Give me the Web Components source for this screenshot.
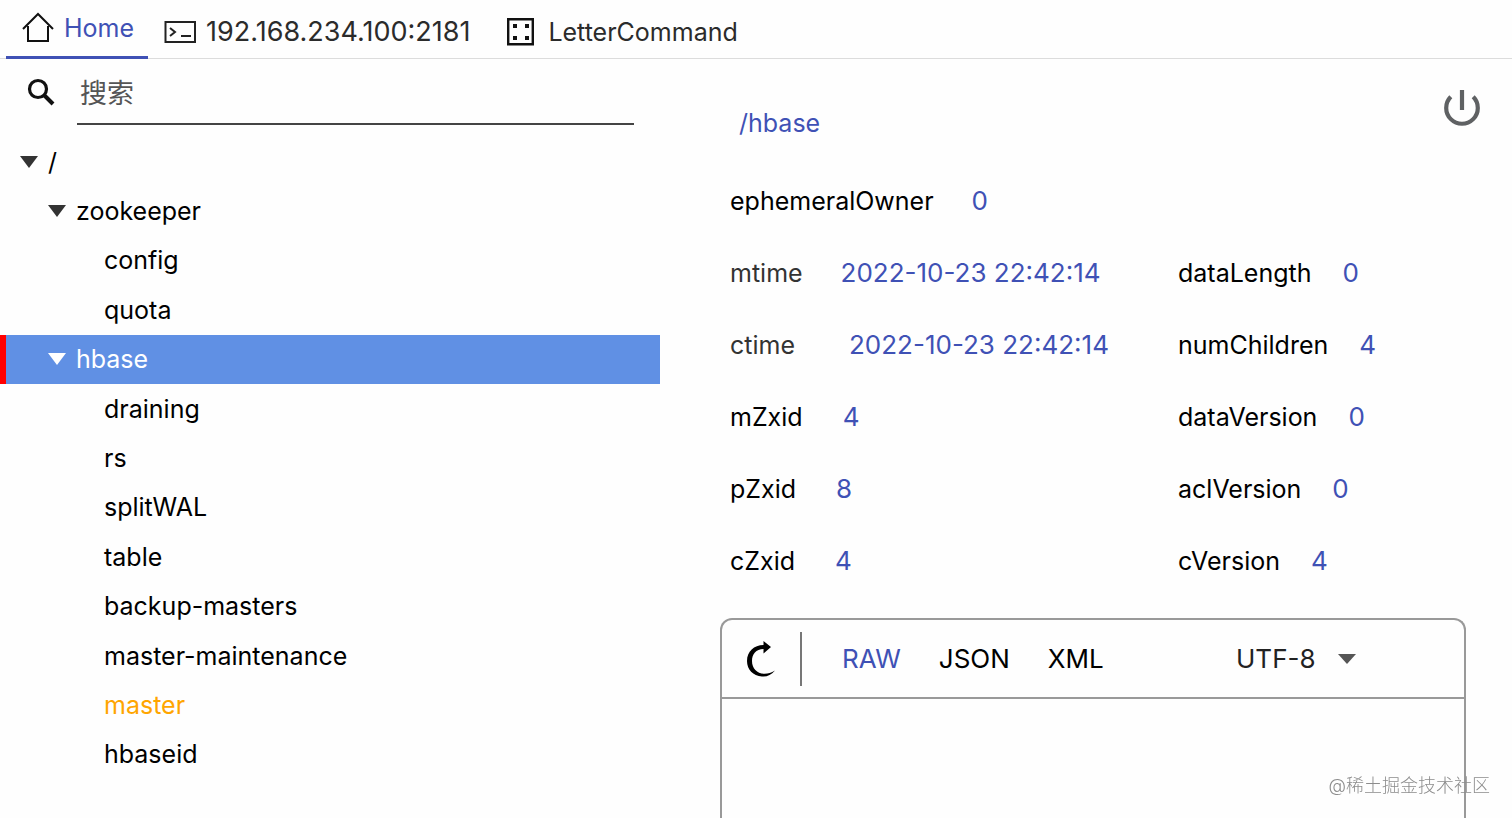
<!DOCTYPE html>
<html lang="zh-CN">
<head>
<meta charset="utf-8">
<title>ZooKeeper</title>
<style>
html { --accent: #3f51b5; --value-size: 26px; --address-size: 27px; }
body { margin: 0; background: #fefefe; color: #000; font: 25px/32px Inter, "Noto Sans CJK SC", sans-serif; }
</style>
</head>
<body>
<zk-app></zk-app>

<template id="t-app">
<style>
:host { display: flex; flex-direction: column; min-height: 100vh; }
main { flex: 1; display: grid; grid-template-columns: minmax(0, 660fr) minmax(0, 852fr); }
.mark { position: fixed; right: 22px; bottom: 20px; font-size: 18px; line-height: 24px; font-weight: 300; color: #8c8c8c; pointer-events: none; }
</style>
<zk-tabs>
  <zk-tab selected><svg slot="icon" width="32" height="32" viewBox="0 0 32 32" fill="none" stroke="#111" stroke-width="2"><path d="M1 17 16 2l15 15M6 14v15h20V14"/></svg>Home</zk-tab>
  <zk-tab address><svg slot="icon" width="32" height="24" viewBox="0 0 32 24" fill="none" stroke="#222" stroke-width="2"><path d="M1.500 2h29.500v20H1.500zM6 8l5 4-5 4M17 16h10"/></svg>192.168.234.100:2181</zk-tab>
  <zk-tab><svg slot="icon" width="34" height="28" viewBox="-3 0 34 28"><path d="M1.200 1.200h24.600v25H1.200z" fill="none" stroke="#111" stroke-width="2.400"/><path d="M6 6h4v4H6zM18 6h4v4h-4zM6 18h4v4H6zM18 18h4v4h-4z" fill="#111"/></svg>LetterCommand</zk-tab>
</zk-tabs>
<main>
  <zk-sidebar></zk-sidebar>
  <zk-detail></zk-detail>
</main>
<div class="mark">@稀土掘金技术社区</div>
</template>

<template id="t-tabs">
<style>
:host { display: block; border-bottom: 1px solid #dcdcdc; }
nav { display: flex; height: 58px; padding-left: 6px; }
</style>
<nav><slot></slot></nav>
</template>

<template id="t-tab">
<style>
:host { display: flex; }
:host([address]) { font-size: var(--address-size); }
button { display: flex; align-items: center; gap: 10px; height: 59px; padding: 4px 18px 0 16px; border: 0; background: none; color: #2b2b2b; font: inherit; white-space: nowrap; }
:host([selected]) button { padding: 0 14px 0 16px; border-bottom: 3px solid var(--accent); color: var(--accent); }
::slotted(svg) { display: block; }
</style>
<button><slot name="icon"></slot><slot></slot></button>
</template>

<template id="t-sidebar">
<style>
:host { display: flex; flex-direction: column; }
.search { display: flex; align-items: center; gap: 20px; padding: 0 26px 0 24px; }
input { flex: 1; min-width: 0; height: 66px; box-sizing: border-box; padding: 4px 3px 0; border: 0; border-bottom: 2px solid #444; background: none; font: inherit; font-size: var(--address-size); color: #333; outline: 0; }
input::placeholder { color: #555; opacity: 1; }
.tree { flex: 1; display: grid; grid-auto-rows: 1fr; margin: 12px 0 39px; }
</style>
<label class="search">
  <svg width="33" height="34" viewBox="0 0 33 34" fill="none" stroke="#111"><circle cx="14" cy="14" r="8.500" stroke-width="3.200"/><path d="m20 20 9 9" stroke-width="4"/></svg>
  <input type="text" placeholder="搜索" aria-label="搜索">
</label>
<div class="tree" role="tree">
  <zk-node level="0" open>/</zk-node>
  <zk-node level="1" open>zookeeper</zk-node>
  <zk-node level="2">config</zk-node>
  <zk-node level="2">quota</zk-node>
  <zk-node level="1" open selected>hbase</zk-node>
  <zk-node level="2">draining</zk-node>
  <zk-node level="2">rs</zk-node>
  <zk-node level="2">splitWAL</zk-node>
  <zk-node level="2">table</zk-node>
  <zk-node level="2">backup-masters</zk-node>
  <zk-node level="2">master-maintenance</zk-node>
  <zk-node level="2" ephemeral>master</zk-node>
  <zk-node level="2">hbaseid</zk-node>
</div>
</template>

<template id="t-node">
<style>
:host { display: flex; align-items: center; gap: 10px; min-height: 40px; box-sizing: border-box; border-left: 6px solid transparent; padding-left: 14px; color: #000; --arrow: #333; }
:host([level="1"]) { padding-left: 42px; }
:host([level="2"]) { padding-left: 70px; }
:host([selected]) { background: #6090e4; border-left-color: #f00; color: #fff; --arrow: #fff; }
:host([ephemeral]) { color: #ffa500; }
svg { fill: var(--arrow); }
:host(:not([open])) svg { visibility: hidden; }
</style>
<svg width="18" height="12" viewBox="0 0 18 12" aria-hidden="true"><path d="M0 0h18L9 12z"/></svg>
<span><slot></slot></span>
</template>

<template id="t-detail">
<style>
:host { display: flex; flex-direction: column; padding-left: 60px; padding-right: 46px; }
header { display: flex; justify-content: space-between; height: 106px; padding-left: 19px; }
h1 { margin: 48px 0 0; font: inherit; color: var(--accent); }
button { align-self: flex-start; margin: 25px -20px 0 0; padding: 0; border: 0; background: none; }
svg { display: block; }
</style>
<header>
  <h1>/hbase</h1>
  <button aria-label="断开连接"><svg width="48" height="48" viewBox="0 0 48 48" fill="none" stroke="#5f6163" stroke-width="4.200"><path d="M24 6v20M12.800 12.800A15.800 15.800 0 1 0 35.200 12.800"/></svg></button>
</header>
<zk-stats></zk-stats>
<zk-editor></zk-editor>
</template>

<template id="t-stats">
<style>
:host { display: block; padding-left: 10px; }
dl { display: grid; grid-template-columns: minmax(0, 448fr) minmax(0, 288fr); grid-auto-rows: 72px; margin: 0; white-space: nowrap; }
div { display: flex; align-items: center; gap: 38px; }
.owner { grid-column: 1 / -1; }
.time dt { color: #333; }
.wide { gap: 54px; }
.zxid { gap: 40px; }
.count { gap: 31px; }
dd { margin: 0; color: var(--accent); font-size: var(--value-size); }
</style>
<dl>
  <div class="owner"><dt>ephemeralOwner</dt><dd>0</dd></div>
  <div class="time"><dt>mtime</dt><dd>2022-10-23 22:42:14</dd></div>
  <div class="count"><dt>dataLength</dt><dd>0</dd></div>
  <div class="time wide"><dt>ctime</dt><dd>2022-10-23 22:42:14</dd></div>
  <div class="count"><dt>numChildren</dt><dd>4</dd></div>
  <div class="zxid"><dt>mZxid</dt><dd>4</dd></div>
  <div class="count"><dt>dataVersion</dt><dd>0</dd></div>
  <div class="zxid"><dt>pZxid</dt><dd>8</dd></div>
  <div class="count"><dt>aclVersion</dt><dd>0</dd></div>
  <div class="zxid"><dt>cZxid</dt><dd>4</dd></div>
  <div class="count"><dt>cVersion</dt><dd>4</dd></div>
</dl>
</template>

<template id="t-editor">
<style>
:host { flex: 1; display: flex; flex-direction: column; margin-top: 21px; border: 2px solid #999; border-bottom: 0; border-radius: 12px 12px 0 0; font-size: var(--value-size); }
.bar { display: flex; align-items: center; height: 77px; border-bottom: 2px solid #999; padding: 0 108px 0 24px; }
button { padding: 0; border: 0; background: none; font: inherit; color: #000; }
svg { display: block; }
.formats { display: flex; gap: 38px; margin-left: 22px; padding-left: 40px; height: 54px; border-left: 2px solid #777; }
.formats [aria-pressed=true] { color: var(--accent); }
.charset { display: grid; align-items: center; margin-left: auto; }
select, .charset svg { grid-area: 1 / 1; }
.charset svg { justify-self: end; pointer-events: none; }
select { appearance: none; border: 0; padding: 0 40px 0 0; background: none; font: inherit; color: #222; }
textarea { flex: 1; min-height: 80px; resize: none; border: 0; background: none; padding: 12px; font: inherit; outline: 0; }
</style>
<div class="bar">
  <button aria-label="刷新"><svg width="32" height="38" viewBox="0 0 32 38"><path d="M17.500 1 25 7 17.500 13.500V9C10 9 6 14 6 21C6 28.500 11 33.500 18 33.800C22 33.900 25 33 29 30.500C25 35 21 37 16 36.500C7 36 1 29.500 1 21C1 11.500 8 5 17.500 5z"/></svg></button>
  <div class="formats"><button aria-pressed="true">RAW</button><button>JSON</button><button>XML</button></div>
  <div class="charset"><select aria-label="编码"><option>UTF-8</option></select><svg width="18" height="10" viewBox="0 0 18 10"><path d="M0 0h18L9 10z" fill="#555"/></svg></div>
</div>
<textarea aria-label="data"></textarea>
</template>

<script>
function define(name, template, setup) {
  customElements.define(name, class extends HTMLElement {
    constructor() {
      super();
      this.attachShadow({ mode: "open" }).append(document.getElementById(template).content.cloneNode(true));
    }
    connectedCallback() { if (setup) setup(this); }
  });
}
define("zk-tab", "t-tab");
define("zk-tabs", "t-tabs");
define("zk-node", "t-node", el => {
  el.setAttribute("role", "treeitem");
  el.setAttribute("aria-level", Number(el.getAttribute("level")) + 1);
});
define("zk-sidebar", "t-sidebar");
define("zk-stats", "t-stats");
define("zk-editor", "t-editor");
define("zk-detail", "t-detail");
define("zk-app", "t-app");
</script>
</body>
</html>
